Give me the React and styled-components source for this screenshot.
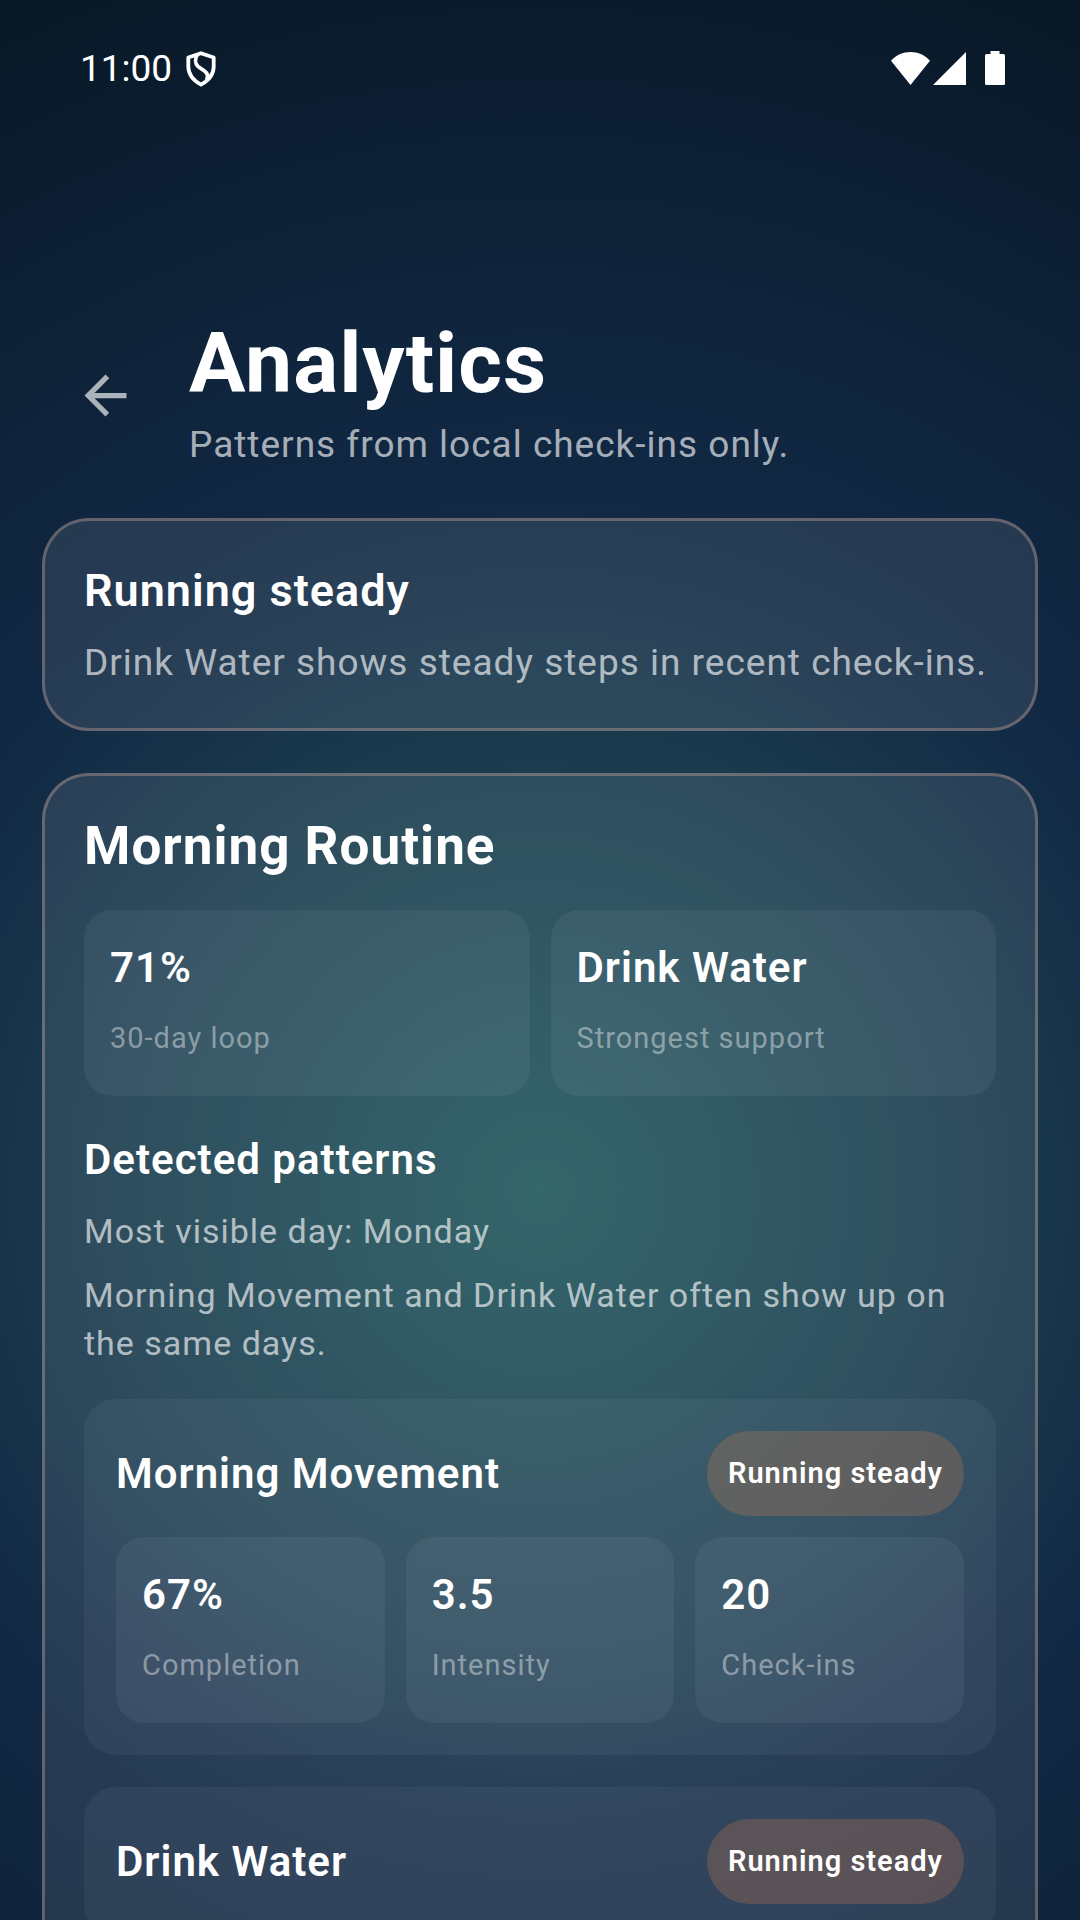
import React from 'react'
import styled, { createGlobalStyle } from 'styled-components'

const WHITE = '#ffffff'
const TEXT_SOFT = 'rgba(255, 255, 255, 0.65)'
const TEXT_FAINT = 'rgba(255, 255, 255, 0.42)'

const GlobalStyle = createGlobalStyle`
  * {
    box-sizing: border-box;
  }
  body {
    margin: 0;
    background: #081826;
    color: ${WHITE};
    font-family: Roboto, 'Liberation Sans', sans-serif;
    letter-spacing: 1px;
  }
  h1, h2, h3, p, dl, dt, dd {
    margin: 0;
  }
`

const Screen = styled.div`
  height: 100vh;
  overflow: hidden;
  background: radial-gradient(
    circle farthest-corner at 50% 62%,
    #20575c 0%,
    #1a3b4e 34%,
    #142e47 47%,
    #112844 54%,
    #0f243c 68%,
    #0b1c2f 87%,
    #081826 100%
  );
`
const StatusBar = styled.div`
  display: flex;
  align-items: center;
  justify-content: space-between;
  height: 136px;
  padding: 0 75px 0 80px;
`
const StatusGroup = styled.div`
  display: flex;
  align-items: center;
  gap: ${(props) => props.$gap}px;
`
const Clock = styled(StatusGroup)`
  padding-top: 2px;
`
const Time = styled.span`
  font-size: 37px;
  line-height: 44px;
  letter-spacing: 0;
`
const Header = styled.header`
  display: flex;
  align-items: center;
  gap: 21px;
  padding: 178px 42px 42px;
`
const BackButton = styled.button`
  display: grid;
  place-items: center;
  width: 126px;
  height: 126px;
  padding: 0;
  border: 0;
  background: none;
  color: ${TEXT_SOFT};
`
const PageTitle = styled.h1`
  font-size: 84px;
  font-weight: 700;
  line-height: 99px;
`
const Content = styled.main`
  display: flex;
  flex-direction: column;
  gap: 42px;
  padding: 0 42px 42px;
`
const Card = styled.section`
  display: flex;
  flex-direction: column;
  gap: ${(props) => props.$gap}px;
  padding: 39px;
  border: 3px solid rgba(255, 200, 175, 0.29);
  border-radius: 47px;
  background: rgba(255, 255, 255, 0.09);
`
const CardHeading = styled.h2`
  font-size: 45px;
  font-weight: 600;
  line-height: 61px;
`
const RoutineHeading = styled.h2`
  font-size: 53px;
  font-weight: 700;
  line-height: 63px;
`
const SubHeading = styled.h3`
  font-size: 42px;
  font-weight: 600;
  line-height: 63px;
`
const Lead = styled.p`
  color: ${TEXT_SOFT};
  font-size: 37px;
  line-height: ${(props) => props.$line}px;
`
const Note = styled.p`
  color: ${TEXT_SOFT};
  font-size: 34px;
  line-height: 48px;
`
const Patterns = styled.div`
  display: flex;
  flex-direction: column;
  gap: 16px;
`
const Metrics = styled.dl`
  display: grid;
  grid-auto-flow: column;
  grid-auto-columns: minmax(0, 1fr);
  gap: 21px;
`
const Tile = styled.div`
  display: flex;
  flex-direction: column-reverse;
  gap: 8px;
  padding: 26px;
  border-radius: 28px;
  background: rgba(230, 242, 255, 0.06);
`
const TileValue = styled.dd`
  font-size: 42px;
  font-weight: 600;
  line-height: 63px;
`
const TileLabel = styled.dt`
  color: ${TEXT_FAINT};
  font-size: 29px;
  line-height: 63px;
`
const Habit = styled.article`
  display: flex;
  flex-direction: column;
  gap: 21px;
  padding: 32px;
  border-radius: 32px;
  background: rgba(230, 242, 255, 0.05);
`
const HabitTop = styled.div`
  display: flex;
  align-items: center;
  justify-content: space-between;
`
const Badge = styled.span`
  padding: 11px 21px;
  border-radius: 43px;
  background: rgba(215, 126, 77, 0.25);
  font-size: 29px;
  font-weight: 600;
  line-height: 63px;
`

const ShieldIcon = () => (
  <svg width="30" height="36" viewBox="0 0 30 36" fill="none" stroke="currentColor" strokeWidth="3.8" strokeLinejoin="round">
    <path d="M15 2.200 27.700 6.500V15.500C27.700 23.500 22.500 29.500 15 33.700 7.500 29.500 2.300 23.500 2.300 15.500V6.500Z" />
    <path d="M11.500 3.500C8.800 7.500 9 12.500 12 15.500L18.500 20C22 22.500 22.500 25.500 20.500 29" />
  </svg>
)

const WifiIcon = () => (
  <svg width="39" height="33" viewBox="0 0 39 33" fill="currentColor">
    <path d="M0 8.700C5 3.300 12 0 19.500 0S34 3.300 39 8.700L19.500 33Z" />
  </svg>
)

const SignalIcon = () => (
  <svg width="33" height="33" viewBox="0 0 33 33" fill="currentColor">
    <path d="M33 0V33H0Z" />
  </svg>
)

const BatteryIcon = () => (
  <svg width="20" height="34" viewBox="0 0 20 34" fill="currentColor">
    <path d="M5.500 0H14.500V3H18.500Q20 3 20 4.500V32.500Q20 34 18.500 34H1.500Q0 34 0 32.500V4.500Q0 3 1.500 3H5.500Z" />
  </svg>
)

const ArrowBackIcon = () => (
  <svg width="63" height="63" viewBox="0 0 24 24" fill="currentColor">
    <path d="M20 11H7.830l5.590-5.590L12 4l-8 8 8 8 1.410-1.410L7.830 13H20v-2z" />
  </svg>
)

const summary = [
  { value: '71%', label: '30-day loop' },
  { value: 'Drink Water', label: 'Strongest support' },
]

const habits = [
  {
    name: 'Morning Movement',
    status: 'Running steady',
    metrics: [
      { value: '67%', label: 'Completion' },
      { value: '3.5', label: 'Intensity' },
      { value: '20', label: 'Check-ins' },
    ],
  },
  { name: 'Drink Water', status: 'Running steady', metrics: [] },
]

const MetricTiles = ({ items }) => (
  <Metrics>
    {items.map((item) => (
      <Tile key={item.label}>
        <TileLabel>{item.label}</TileLabel>
        <TileValue>{item.value}</TileValue>
      </Tile>
    ))}
  </Metrics>
)

const App = () => {
  return (
    <Screen>
      <GlobalStyle />
      <StatusBar>
        <Clock $gap={14}>
          <Time>11:00</Time>
          <ShieldIcon />
        </Clock>
        <StatusGroup $gap={19}>
          <StatusGroup $gap={3}>
            <WifiIcon />
            <SignalIcon />
          </StatusGroup>
          <BatteryIcon />
        </StatusGroup>
      </StatusBar>
      <Header>
        <BackButton type="button" aria-label="Back">
          <ArrowBackIcon />
        </BackButton>
        <div>
          <PageTitle>Analytics</PageTitle>
          <Lead $line={63}>Patterns from local check-ins only.</Lead>
        </div>
      </Header>
      <Content>
        <Card $gap={16}>
          <CardHeading>Running steady</CardHeading>
          <Lead $line={52}>Drink Water shows steady steps in recent check-ins.</Lead>
        </Card>
        <Card $gap={32}>
          <RoutineHeading>Morning Routine</RoutineHeading>
          <MetricTiles items={summary} />
          <Patterns>
            <SubHeading>Detected patterns</SubHeading>
            <Note>Most visible day: Monday</Note>
            <Note>Morning Movement and Drink Water often show up on the same days.</Note>
          </Patterns>
          {habits.map((habit) => (
            <Habit key={habit.name}>
              <HabitTop>
                <SubHeading>{habit.name}</SubHeading>
                <Badge>{habit.status}</Badge>
              </HabitTop>
              {habit.metrics.length > 0 && <MetricTiles items={habit.metrics} />}
            </Habit>
          ))}
        </Card>
      </Content>
    </Screen>
  )
}

export default App
